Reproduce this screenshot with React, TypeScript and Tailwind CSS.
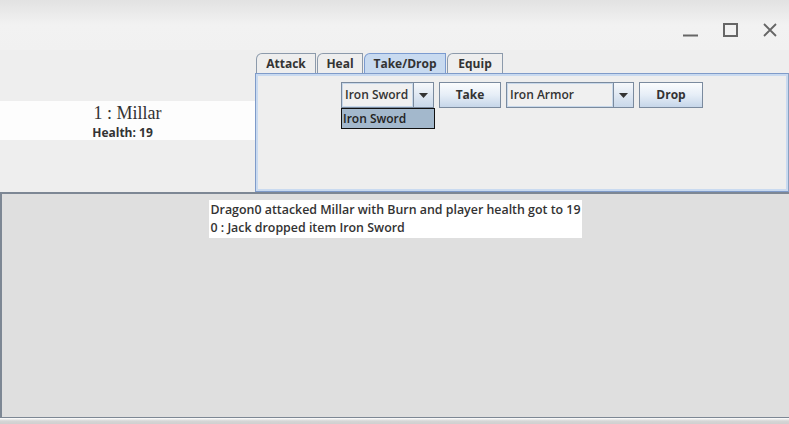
import React from 'react'

const ui = { fontFamily: '"Open Sans", "Noto Sans", sans-serif' }

function Tab({ label, active, w }: { label: string; active?: boolean; w: string }) {
  return (
    <div
      className={`relative h-[20px] ${w} flex items-center justify-center text-[12px] font-bold text-[#333333] border border-b-0 rounded-tl-[6px] ${
        active ? 'bg-[#c8daf0] border-[#7b9bd0]' : 'bg-[#eeeeee] border-[#8c9aab]'
      }`}
    >
      {label}
    </div>
  )
}

function Combo({ value, w }: { value: string; w: string }) {
  return (
    <div className={`flex h-[26px] ${w} border border-[#7a8a9e] bg-[#eeeeee]`}>
      <div className="flex-1 flex items-center pl-[2px] text-[12px] font-semibold text-[#333333] border border-[#c8d8ea] bg-[#f0f0f0]">
        {value}
      </div>
      <div className="w-[20px] flex items-center justify-center border-l border-[#7a8a9e] bg-gradient-to-b from-[#f6f8fb] to-[#c9d8ea]">
        <svg width="9" height="5" viewBox="0 0 9 5">
          <path d="M0 0h9L4.5 5z" fill="#333333" />
        </svg>
      </div>
    </div>
  )
}

function Button({ label, w }: { label: string; w: string }) {
  return (
    <div
      className={`h-[26px] ${w} flex items-center justify-center text-[12px] font-bold text-[#333333] border border-[#7a8a9e] bg-gradient-to-b from-[#fbfcfd] via-[#e6eef7] to-[#c6d6e9]`}
    >
      {label}
    </div>
  )
}

export default function App() {
  return (
    <div className="w-[789px] h-[424px] overflow-hidden flex flex-col bg-[#eeeeee]" style={ui}>
      {/* Title bar */}
      <div className="h-[50px] bg-gradient-to-b from-[#e2e2e2] via-[#f2f2f2] to-[#f1f1f1] flex items-end justify-end pb-[13px] pr-[12px] gap-[25px]">
        <svg width="15" height="14" viewBox="0 0 15 14">
          <path d="M0 12.5h15" stroke="#666666" strokeWidth="2" />
        </svg>
        <svg width="15" height="14" viewBox="0 0 15 14">
          <rect x="1" y="1" width="13" height="12" fill="none" stroke="#666666" strokeWidth="2" />
        </svg>
        <svg width="14" height="14" viewBox="0 0 14 14">
          <path d="M1 1l12 12M13 1L1 13" stroke="#666666" strokeWidth="1.8" />
        </svg>
      </div>

      {/* Top area */}
      <div className="h-[142px] flex">
        <div className="w-[255px] pt-[51px]">
          <div className="h-[39px] bg-[#fdfdfd] flex flex-col items-center pt-[1px]">
            <div className="text-[18px] leading-[23px] text-[#333333]" style={{ fontFamily: '"Liberation Serif", serif' }}>
              1 : Millar
            </div>
            <div className="text-[12px] leading-[15px] font-bold text-[#333333] mr-[10px]">Health: 19</div>
          </div>
        </div>

        <div className="flex-1 flex flex-col pt-[3px]">
          <div className="flex pl-[1px] gap-[1px]">
            <Tab label="Attack" w="w-[60px]" />
            <Tab label="Heal" w="w-[46px]" />
            <Tab label="Take/Drop" w="w-[82px]" active />
            <Tab label="Equip" w="w-[56px]" />
          </div>
          <div className="flex-1 border border-[#7f9bc9] border-r-[#8aa1c0] shadow-[inset_0_0_0_2px_#c9daf0] bg-[#eeeeee] relative">
            <div className="flex justify-center gap-[5px] pt-[8px]">
              <div className="relative">
                <Combo value="Iron Sword" w="w-[93px]" />
                <div className="absolute left-0 top-[26px] w-[94px] h-[21px] bg-[#a3b8cc] border border-[#111111] flex items-center pl-[1px] text-[12px] font-semibold text-[#222222]">
                  Iron Sword
                </div>
              </div>
              <Button label="Take" w="w-[62px]" />
              <Combo value="Iron Armor" w="w-[128px]" />
              <Button label="Drop" w="w-[64px]" />
            </div>
          </div>
        </div>
      </div>

      {/* Message area */}
      <div className="flex-1 bg-[#dfdfdf] border-t-2 border-l-2 border-b border-[#7d8794] flex justify-center pt-[6px]">
        <div className="h-[38px] bg-white px-[1px] text-[12.4px] font-semibold text-[#333333] leading-[18px] pt-[1px]">
          <div>Dragon0 attacked Millar with Burn and player health got to 19</div>
          <div>0 : Jack dropped item Iron Sword</div>
        </div>
      </div>
      <div className="h-[6px] bg-gradient-to-b from-[#ffffff] via-[#d6d6d6] to-[#d0d0d0]" />
    </div>
  )
}
